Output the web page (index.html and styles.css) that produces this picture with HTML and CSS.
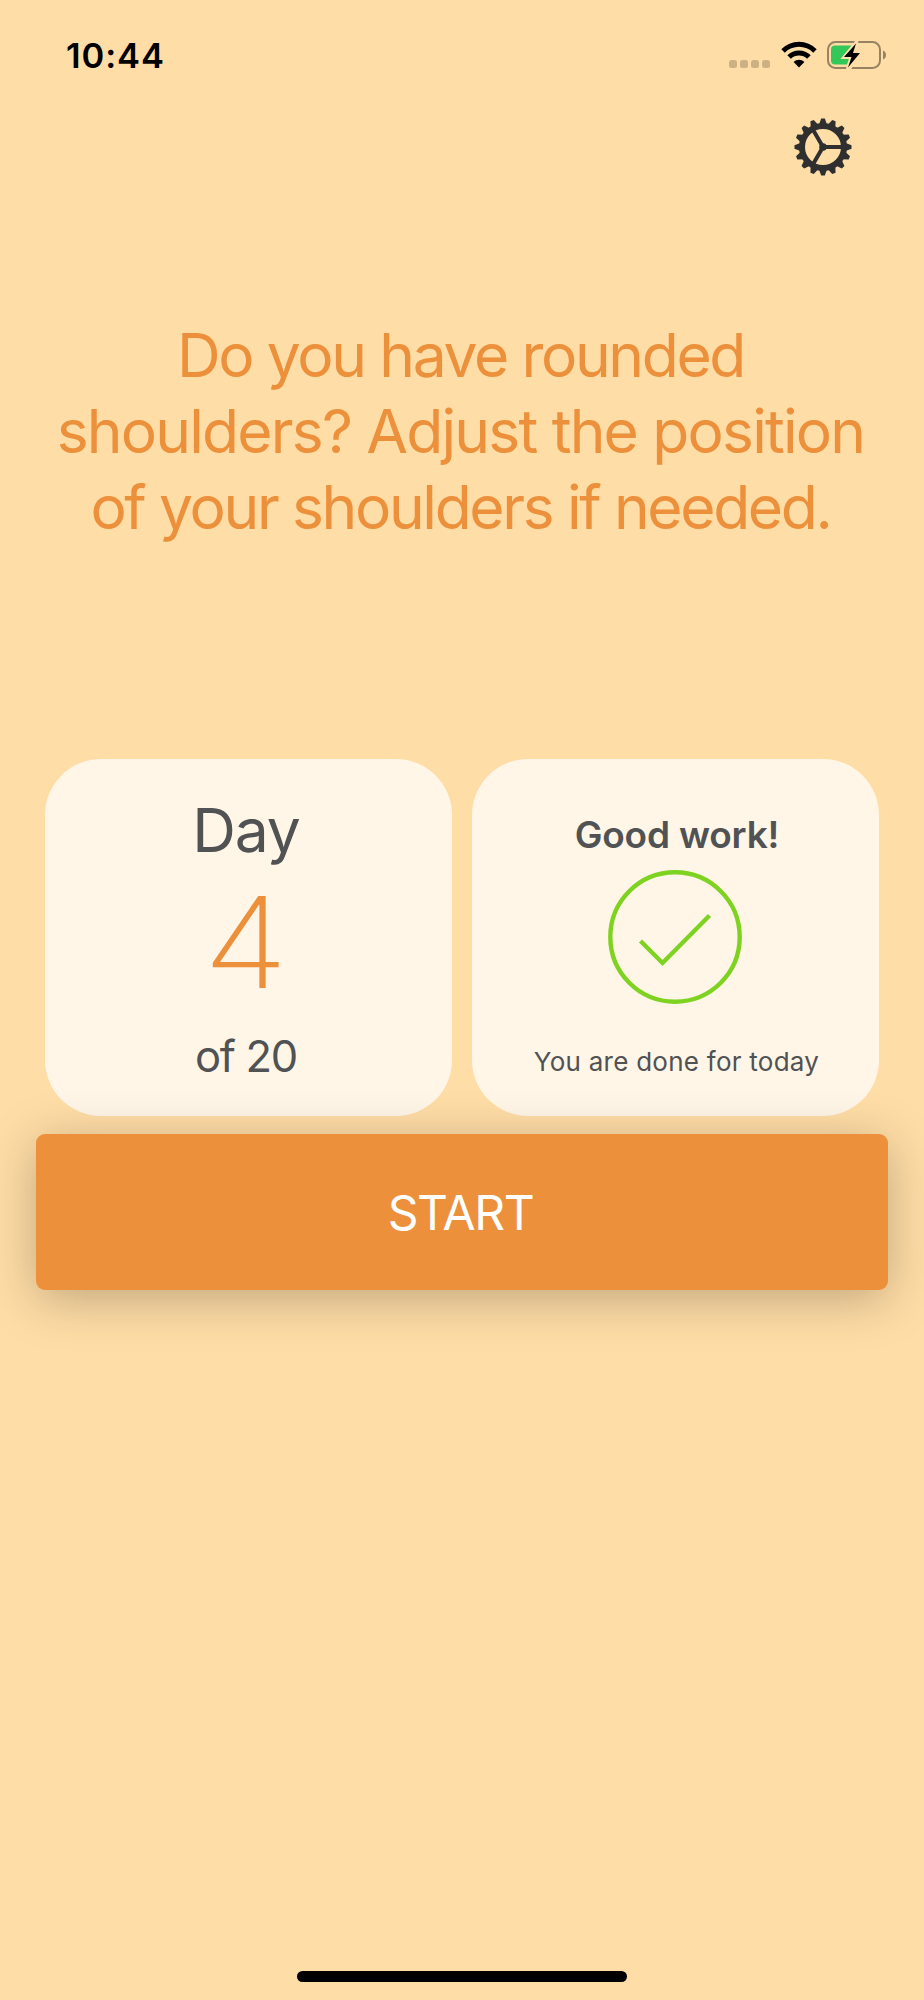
FILE: index.html
```html
<!DOCTYPE html>
<html lang="en">
<head>
<meta charset="utf-8">
<title>Posture</title>
<link rel="stylesheet" href="styles.css">
</head>
<body>
<main class="screen">
  <header class="status">
    <span class="time">10:44</span>
    <div class="indicators">
      <div class="dots"><i></i><i></i><i></i><i></i></div>
      <svg class="wifi" width="36" height="27" viewBox="0 0 36 27">
        <path d="M0.3 8.2a25 25 0 0 1 35.4 0l-3.5 3.5a20 20 0 0 0-28.4 0z"/>
        <path d="M6.3 14.2a16.6 16.6 0 0 1 23.4 0l-3.6 3.5a11.6 11.6 0 0 0-16.2 0z"/>
        <path d="M12.6 21a7.8 7.8 0 0 1 10.8 0L18 26.4z"/>
      </svg>
      <svg class="battery" width="60" height="30" viewBox="0 0 60 30">
        <rect x="1" y="2" width="52" height="26" rx="7.500" fill="none" stroke="#978262" stroke-width="2"/>
        <path d="M56 10.500c4 1.500 4 7.500 0 9z" fill="#978262"/>
        <path d="M8 5.500h20L15 19h8l-3 5.500H8a4 4 0 0 1-4-4v-11a4 4 0 0 1 4-4z" fill="#34c759"/>
        <path d="M29.500 1 15.500 18h7.500l-3 11h3l11-15.500h-7.500l4-12.500z" fill="#ffdda6" stroke="#ffdda6" stroke-width="2"/>
        <path d="M29 3.500 17 17h7.500l-3.500 10.500L33 13h-7z" fill="#000"/>
      </svg>
    </div>
  </header>
  <nav class="tools">
    <svg class="gear" width="58" height="58" viewBox="-29 -29 58 58">
      <defs>
        <path id="tooth" d="M-4.200-22-1.800-28.500H1.800L4.200-22z"/>
        <g id="teeth"><use href="#tooth"/><use href="#tooth" transform="rotate(22.500)"/><use href="#tooth" transform="rotate(45)"/><use href="#tooth" transform="rotate(67.500)"/></g>
      </defs>
      <g fill="#2f2f2f">
        <use href="#teeth"/><use href="#teeth" transform="rotate(90)"/><use href="#teeth" transform="rotate(180)"/><use href="#teeth" transform="rotate(270)"/>
        <circle r="3.800"/>
      </g>
      <g fill="none" stroke="#2f2f2f">
        <circle r="21" stroke-width="6"/>
        <path d="M0 0H20M0 0-10-17.300M0 0-10 17.300" stroke-width="4"/>
      </g>
    </svg>
  </nav>
  <h1 class="question">
    <span class="l1">Do you have rounded</span>
    <span class="l2">shoulders? Adjust the position</span>
    <span class="l3">of your shoulders if needed.</span>
  </h1>
  <section class="cards">
    <article class="card progress">
      <div class="day">Day</div>
      <div class="number">4</div>
      <div class="total">of 20</div>
    </article>
    <article class="card done">
      <div class="praise">Good work!</div>
      <svg class="check" width="134" height="134" viewBox="0 0 134 134" fill="none" stroke="#7ed321" stroke-width="4.400">
        <circle cx="67" cy="67" r="64.700"/>
        <path d="M32.500 71 54.500 93 101.500 45.500"/>
      </svg>
      <div class="note">You are done for today</div>
    </article>
  </section>
  <button class="start"><span>START</span></button>
  <div class="home"></div>
</main>
</body>
</html>
```
FILE: styles.css
```css
* { box-sizing: border-box; }
body { margin: 0; background: #ffdda6; font-family: Inter, "Liberation Sans", sans-serif; }
.screen { width: 924px; height: 2000px; display: flex; flex-direction: column; overflow: hidden; }
.status { height: 110px; padding: 35px 37px 0 66px; display: flex; justify-content: space-between; align-items: flex-start; }
.time { font-size: 34.500px; font-weight: 600; line-height: 42px; letter-spacing: 0.9px; color: #000; white-space: nowrap; }
.indicators { display: flex; align-items: flex-start; padding-top: 5px; }
.dots { display: flex; gap: 3px; padding-top: 20px; margin-right: 11px; }
.dots i { width: 8px; height: 8px; border-radius: 2.5px; background: #ccb185; }
.wifi { margin: 1px 10px 0 0; }
.battery { display: block; }
.tools { height: 207px; padding: 8px 72px 0 0; display: flex; justify-content: flex-end; }
.question { margin: 0; height: 442px; padding-right: 3px; display: flex; flex-direction: column; align-items: center; font-size: 60.5px; font-weight: 400; line-height: 76px; color: #ec903c; white-space: nowrap; }
.l1 { letter-spacing: -2.35px; }
.l2 { letter-spacing: -1.8px; }
.l3 { letter-spacing: -2.35px; }
.cards { display: grid; grid-template-columns: 407px 407px; gap: 20px; padding: 0 45px; margin-bottom: 18px; }
.card { height: 357px; border-radius: 56px; background: #fff6e8; color: #505253; display: flex; flex-direction: column; align-items: center; white-space: nowrap; }
.progress { padding: 33px 5px 0 0; }
.day { font-size: 60.5px; line-height: 76px; letter-spacing: -1px; }
.number { margin-top: 11px; font-size: 126px; line-height: 126px; font-weight: 200; color: #ec903c; transform: scaleX(1.1); }
.total { margin-top: 25px; font-size: 43.500px; line-height: 52px; letter-spacing: -1.3px; }
.done { padding: 53px 1px 0 0; }
.praise { font-size: 37px; font-weight: 600; line-height: 46px; letter-spacing: -0.2px; padding-left: 4px; }
.check { margin-top: 12px; display: block; }
.note { margin-top: 42px; font-size: 26px; line-height: 32px; letter-spacing: 0.25px; padding-left: 3px; }
.start { flex: none; position: relative; margin: 0 36px; height: 156px; border: 0; border-radius: 9px; padding: 2px 3px 0 0; background: #ec903c; color: #fff; font: 400 48px/60px Inter, "Liberation Sans", sans-serif; letter-spacing: -1.4px; box-shadow: 0 9px 50px rgba(0, 0, 0, 0.25); }
.home { width: 330px; height: 11px; border-radius: 6px; background: #000; margin: 681px auto 0; }
```
